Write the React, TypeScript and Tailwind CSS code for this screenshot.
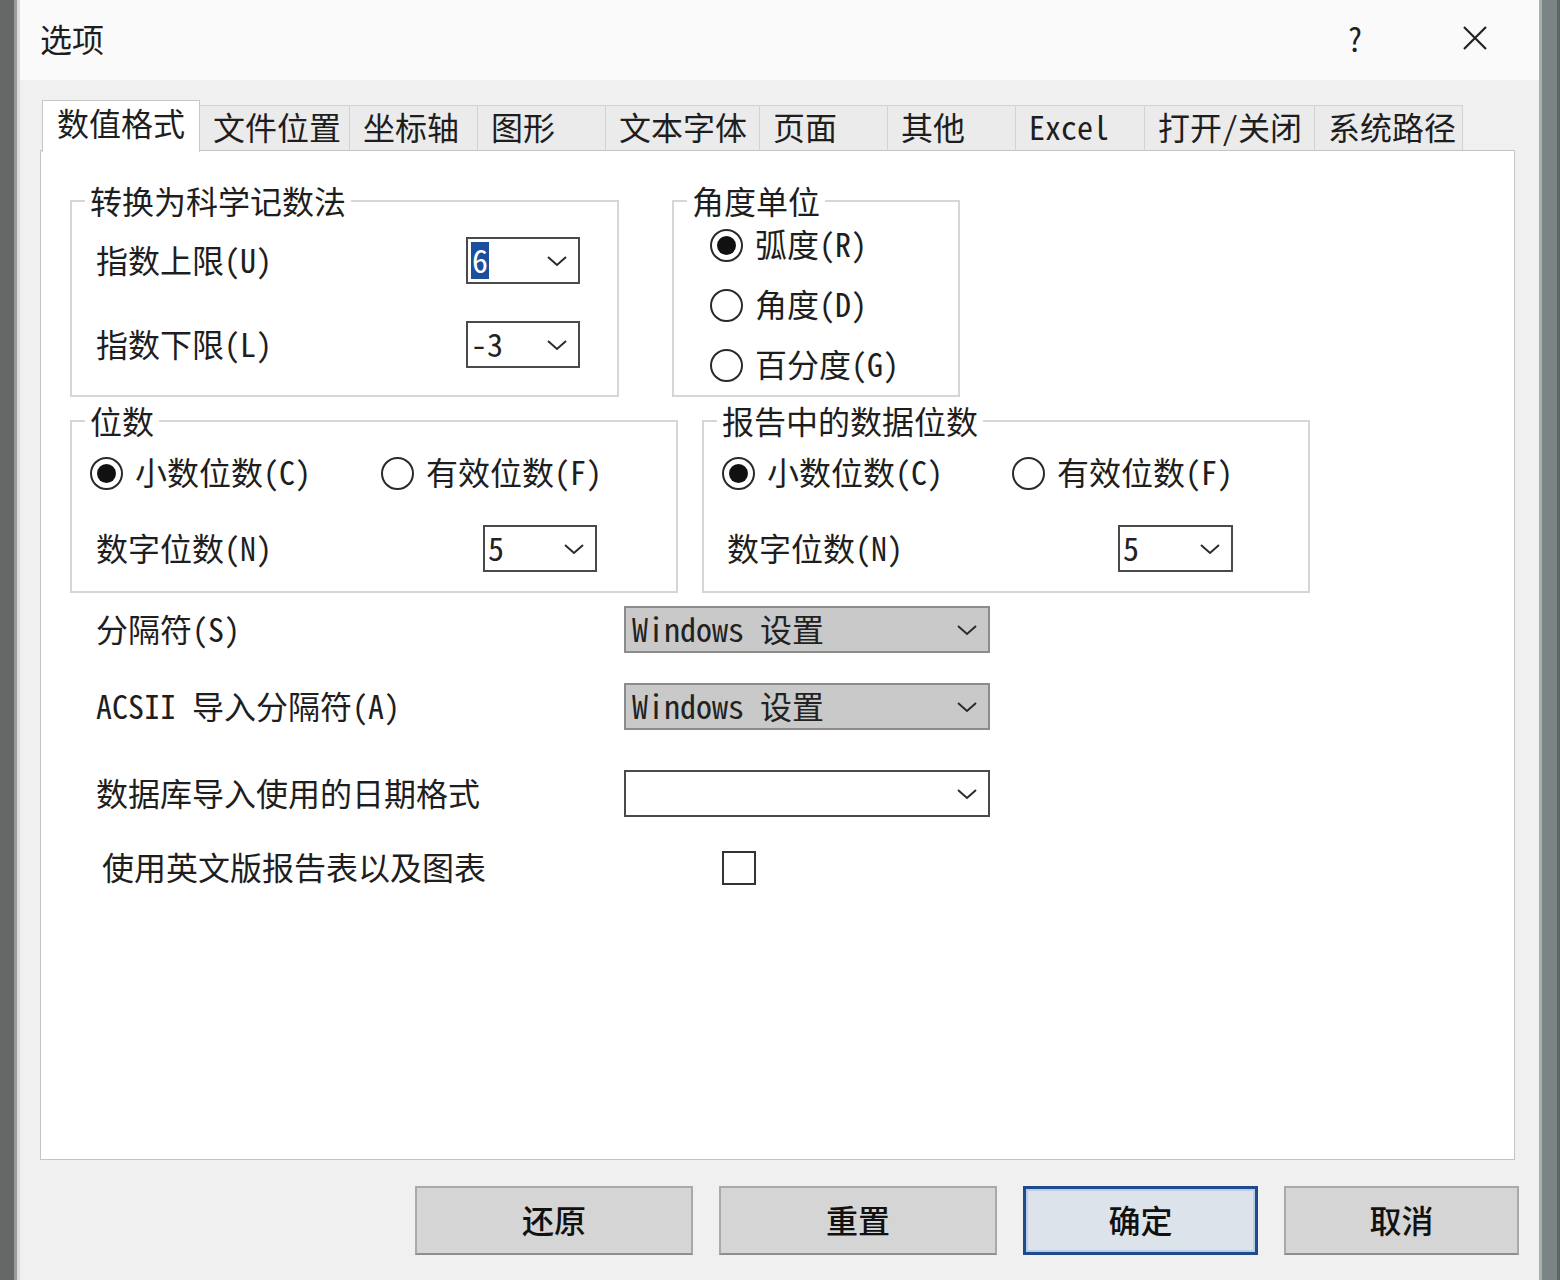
import clsx from 'clsx'

const tabs = [
  { label: '数值格式', w: 'w-[158px]', active: true },
  { label: '文件位置', w: 'w-[150px]' },
  { label: '坐标轴', w: 'w-[128px]' },
  { label: '图形', w: 'w-[128px]' },
  { label: '文本字体', w: 'w-[154px]' },
  { label: '页面', w: 'w-[128px]' },
  { label: '其他', w: 'w-[128px]' },
  { label: 'Excel', w: 'w-[129px]' },
  { label: '打开/关闭', w: 'w-[170px]' },
  { label: '系统路径', w: 'w-[148px]' },
]

function Chevron() {
  return (
    <svg width="22" height="12" viewBox="0 0 22 12" className="shrink-0">
      <path d="M2 2 L11 10 L20 2" fill="none" stroke="#2b2b2b" strokeWidth="2" />
    </svg>
  )
}

function Combo({
  value,
  width,
  gray,
  selected,
}: {
  value?: string
  width: string
  gray?: boolean
  selected?: boolean
}) {
  return (
    <div
      className={clsx(
        'flex h-[47px] shrink-0 items-center justify-between border-2 pr-[10px]',
        width,
        gray ? 'border-[#8c8c8c] bg-[#c9c9c9] pl-[6px]' : 'border-[#4a4a4a] bg-white pl-[3px]'
      )}
    >
      {selected ? (
        <span className="bg-[#1b4f9e] px-[1px] pb-[3px] leading-[34px] text-white">{value}</span>
      ) : (
        <span className="pb-[4px] text-[#222]">{value}</span>
      )}
      <Chevron />
    </div>
  )
}

function Radio({ checked }: { checked?: boolean }) {
  return (
    <span className="flex h-[33px] w-[33px] shrink-0 items-center justify-center rounded-full border-2 border-[#2a2a2a] bg-white">
      {checked && <span className="h-[19px] w-[19px] rounded-full bg-[#111]" />}
    </span>
  )
}

function RadioItem({ label, checked, width }: { label: string; checked?: boolean; width?: string }) {
  return (
    <div className={clsx('flex h-[40px] items-center gap-[12px]', width)}>
      <Radio checked={checked} />
      <span className="pb-[4px]">{label}</span>
    </div>
  )
}

function Group({
  title,
  className,
  children,
}: {
  title: string
  className: string
  children: React.ReactNode
}) {
  return (
    <div className={clsx('relative shrink-0 border-2 border-[#d6d6d6]', className)}>
      <span className="absolute -top-[22px] left-[13px] bg-white px-[5px]">{title}</span>
      {children}
    </div>
  )
}

export default function App() {
  return (
    <div className="flex h-[1280px] w-[1560px] overflow-hidden bg-[#f0f0f0] font-['Noto_Sans_Mono_CJK_SC','Noto_Sans_CJK_SC',sans-serif] text-[32px] leading-[40px] text-[#1e1e1e]">
      {/* window frame, left */}
      <div className="flex w-[20px] shrink-0">
        <div className="w-[14px] bg-[#666868]" />
        <div className="w-[3px] bg-[#9a9c9c]" />
        <div className="w-[3px] bg-[#dcdcdc]" />
      </div>

      <div className="flex w-[1519px] shrink-0 flex-col">
        {/* title bar */}
        <div className="flex h-[80px] shrink-0 items-center bg-[#fafafa] pb-[4px] pl-[20px] pr-[51px]">
          <span>选项</span>
          <span className="ml-auto mr-[97px] w-[20px] text-center font-medium">?</span>
          <svg width="26" height="26" viewBox="0 0 26 26">
            <path d="M2 2 L24 24 M24 2 L2 24" stroke="#222" strokeWidth="2.2" fill="none" />
          </svg>
        </div>

        {/* tabs */}
        <div className="mt-[20px] flex h-[50px] items-end pl-[22px]">
          {tabs.map((t) =>
            t.active ? (
              <div
                key={t.label}
                className={clsx(
                  'relative z-10 -mb-[2px] flex h-[52px] shrink-0 items-center border border-b-0 border-[#c8c8c8] bg-white pb-[9px] pl-[14px]',
                  t.w
                )}
              >
                {t.label}
              </div>
            ) : (
              <div
                key={t.label}
                className={clsx(
                  'flex h-[45px] shrink-0 items-center border-t border-r border-[#d2d2d2] bg-[#ebebeb] pb-[4px] pl-[13px]',
                  t.w
                )}
              >
                {t.label}
              </div>
            )
          )}
        </div>

        {/* tab panel */}
        <div className="ml-[20px] flex h-[1010px] w-[1475px] shrink-0 flex-col border border-[#c4c4c4] bg-white pl-[29px] pt-[49px]">
          <div className="flex gap-[53px]">
            <Group title="转换为科学记数法" className="h-[197px] w-[549px]">
              <div className="flex flex-col gap-[37px] pl-[24px] pt-[35px]">
                <div className="flex items-center">
                  <span className="w-[370px] pb-[4px]">指数上限(U)</span>
                  <Combo value="6" width="w-[114px]" selected />
                </div>
                <div className="flex items-center">
                  <span className="w-[370px] pb-[4px]">指数下限(L)</span>
                  <Combo value="-3" width="w-[114px]" />
                </div>
              </div>
            </Group>
            <Group title="角度单位" className="h-[197px] w-[288px]">
              <div className="flex flex-col gap-[20px] pl-[36px] pt-[23px]">
                <RadioItem label="弧度(R)" checked />
                <RadioItem label="角度(D)" />
                <RadioItem label="百分度(G)" />
              </div>
            </Group>
          </div>

          <div className="mt-[23px] flex gap-[24px]">
            <Group title="位数" className="h-[173px] w-[608px]">
              <div className="flex pl-[18px] pt-[31px]">
                <RadioItem label="小数位数(C)" checked width="w-[291px]" />
                <RadioItem label="有效位数(F)" />
              </div>
              <div className="mt-[32px] flex items-center pl-[24px]">
                <span className="w-[387px] pb-[4px]">数字位数(N)</span>
                <Combo value="5" width="w-[114px]" />
              </div>
            </Group>
            <Group title="报告中的数据位数" className="h-[173px] w-[608px]">
              <div className="flex pl-[18px] pt-[31px]">
                <RadioItem label="小数位数(C)" checked width="w-[290px]" />
                <RadioItem label="有效位数(F)" />
              </div>
              <div className="mt-[32px] flex items-center pl-[23px]">
                <span className="w-[391px] pb-[4px]">数字位数(N)</span>
                <Combo value="5" width="w-[115px]" />
              </div>
            </Group>
          </div>

          <div className="mt-[13px] flex items-center">
            <span className="w-[554px] pb-[4px] pl-[26px]">分隔符(S)</span>
            <Combo value="Windows 设置" width="w-[366px]" gray />
          </div>
          <div className="mt-[30px] flex items-center">
            <span className="w-[554px] pb-[4px] pl-[26px]">ACSII 导入分隔符(A)</span>
            <Combo value="Windows 设置" width="w-[366px]" gray />
          </div>
          <div className="mt-[40px] flex items-center">
            <span className="w-[554px] pb-[4px] pl-[26px]">数据库导入使用的日期格式</span>
            <Combo width="w-[366px]" />
          </div>
          <div className="mt-[29px] flex h-[44px] items-center">
            <span className="w-[652px] pb-[4px] pl-[32px]">使用英文版报告表以及图表</span>
            <span className="h-[34px] w-[34px] border-2 border-[#333] bg-white" />
          </div>
        </div>

        {/* buttons */}
        <div className="mt-[26px] flex justify-end gap-[26px] pr-[20px]">
          {['还原', '重置'].map((b) => (
            <button
              key={b}
              className="flex h-[69px] w-[278px] items-center justify-center border-2 border-[#a9a9a9] border-b-[#8d8d8d] bg-[#d5d5d5] pb-[4px] font-['Noto_Sans_CJK_SC',sans-serif] text-[32px] font-medium text-[#111]"
            >
              {b}
            </button>
          ))}
          <button className="flex h-[69px] w-[235px] items-center justify-center border-[3px] border-[#1f4a8c] bg-[#dde3eb] pb-[4px] font-['Noto_Sans_CJK_SC',sans-serif] text-[32px] font-medium text-[#111] shadow-[inset_0_0_0_2px_#b9cde8]">
            确定
          </button>
          <button className="flex h-[69px] w-[235px] items-center justify-center border-2 border-[#a9a9a9] border-b-[#8d8d8d] bg-[#d5d5d5] pb-[4px] font-['Noto_Sans_CJK_SC',sans-serif] text-[32px] font-medium text-[#111]">
            取消
          </button>
        </div>
      </div>

      {/* window frame, right */}
      <div className="flex w-[21px] shrink-0">
        <div className="w-[3px] bg-[#a9b0b0]" />
        <div className="w-[15px] bg-[#7b8484]" />
        <div className="w-[3px] bg-[#5d6464]" />
      </div>
    </div>
  )
}
